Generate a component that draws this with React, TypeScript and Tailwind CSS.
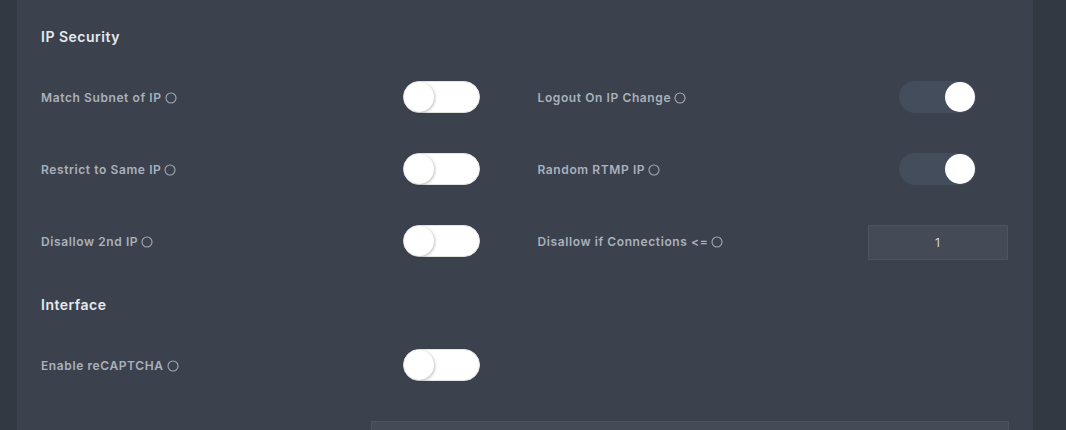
import React from "react";

function Info() {
  return (
    <svg width="12" height="12" viewBox="0 0 12 12" className="ml-[3px] inline-block shrink-0">
      <circle cx="6" cy="6" r="5" fill="none" stroke="#a3aab5" strokeWidth="1.1" />
    </svg>
  );
}

function Toggle({ on }: { on?: boolean }) {
  return on ? (
    <div className="relative h-[32px] w-[77px] rounded-full bg-[#444d5b]">
      <div className="absolute right-[1px] top-[1px] h-[30px] w-[30px] rounded-full bg-white" />
    </div>
  ) : (
    <div className="relative h-[32px] w-[77px] rounded-full border border-[#e3e3e3] bg-white">
      <div className="absolute left-0 top-0 h-[30px] w-[30px] rounded-full bg-white shadow-[1px_1px_3px_rgba(0,0,0,0.25)]" />
    </div>
  );
}

function Label({ text }: { text: string }) {
  return (
    <div className="flex w-[330px] items-center pt-[2px] text-[12px] font-semibold tracking-[0.6px] text-[#aab1bc]">
      <span>{text}</span>
      <Info />
    </div>
  );
}

function Row({ label, children }: { label: string; children: React.ReactNode }) {
  return (
    <div className="flex h-[72px] items-center">
      <Label text={label} />
      <div className="flex w-[140px] justify-center">{children}</div>
    </div>
  );
}

export default function App() {
  return (
    <div className="h-[430px] w-[1066px] overflow-hidden bg-[#333943] pl-[17px] pr-[33px] font-['Inter',sans-serif]">
      <div className="h-full bg-[#3c424d] px-[24px] pt-[26px]">
        <h3 className="text-[14px] font-semibold leading-[22px] tracking-[0.5px] text-[#e6e9ee]">IP Security</h3>
        <div className="mt-[13px] grid grid-cols-2 gap-x-[25px]">
          <Row label="Match Subnet of IP">
            <Toggle />
          </Row>
          <Row label="Logout On IP Change">
            <Toggle on />
          </Row>
          <Row label="Restrict to Same IP">
            <Toggle />
          </Row>
          <Row label="Random RTMP IP">
            <Toggle on />
          </Row>
          <Row label="Disallow 2nd IP">
            <Toggle />
          </Row>
          <Row label="Disallow if Connections <=">
            <div className="mt-[3px] flex h-[35px] w-[140px] items-center justify-center border border-[#4d5460] bg-[#454b56] text-[12px] text-[#d5d9df]">
              1
            </div>
          </Row>
        </div>
        <h3 className="mt-[17px] text-[14px] font-semibold leading-[22px] tracking-[0.5px] text-[#e6e9ee]">Interface</h3>
        <div className="mt-[13px] grid grid-cols-2 gap-x-[25px]">
          <Row label="Enable reCAPTCHA">
            <Toggle />
          </Row>
        </div>
        <div className="mt-[20px] flex">
          <div className="w-[330px]" />
          <div className="h-[35px] flex-1 border border-[#4d5460] bg-[#454b56]" />
        </div>
      </div>
    </div>
  );
}
